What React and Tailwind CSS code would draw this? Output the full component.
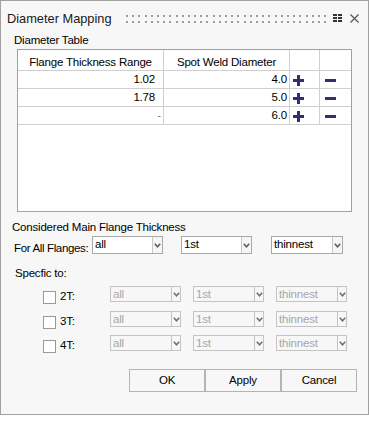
import React from 'react'

const FONT = { fontFamily: '"Liberation Sans", Arial, sans-serif' }

function Chevron({ color = '#606060' }) {
  return (
    <svg width="7" height="5" viewBox="0 0 7 5">
      <path d="M0.8 0.8 L3.5 3.8 L6.2 0.8" fill="none" stroke={color} strokeWidth="1.6" />
    </svg>
  )
}

function Combo({ value, width = 'w-[71px]', disabled = false }) {
  if (disabled) {
    return (
      <div className={`${width} h-[16px] flex border border-[#c4c4c4] bg-[#f7f7f7]`}>
        <div className="flex-1 pl-[2px] leading-[13px] pt-[1px] text-[#a8a8a8]">{value}</div>
        <div className="w-[9px] border-l border-[#c4c4c4] flex items-center justify-center">
          <Chevron color="#707070" />
        </div>
      </div>
    )
  }
  return (
    <div className={`${width} h-[18px] flex border border-[#a8a8a8] bg-white`}>
      <div className="flex-1 pl-[2px] leading-[13px] pt-[1px] text-black">{value}</div>
      <div className="w-[10px] border-l border-[#c8c8c8] bg-[#f5f5f5] flex items-center justify-center">
        <Chevron />
      </div>
    </div>
  )
}

function Plus() {
  return (
    <svg width="11" height="11" viewBox="0 0 11 11">
      <rect x="0" y="4" width="11" height="3" fill="#2e3070" />
      <rect x="4" y="0" width="3" height="11" fill="#2e3070" />
    </svg>
  )
}

function Minus() {
  return (
    <svg width="11" height="3" viewBox="0 0 11 3">
      <rect x="0" y="0" width="11" height="3" fill="#2e3070" />
    </svg>
  )
}

function Grip() {
  const dots = Array.from({ length: 33 }, (_, i) => Math.round(i * 6.19))
  return (
    <svg width="202" height="18" viewBox="0 0 202 18">
      {dots.map(x => (
        <g key={x} fill="#9c9c9c">
          <rect x={x} y="5" width="2" height="2" />
          <rect x={x} y="11" width="2" height="2" />
        </g>
      ))}
    </svg>
  )
}

const rows = [
  { range: '1.02', rangePad: 'pr-[8px]', dia: '4.0', dim: false },
  { range: '1.78', rangePad: 'pr-[8px]', dia: '5.0', dim: false },
  { range: '-', rangePad: 'pr-[2px]', dia: '6.0', dim: true },
]

function SpecRow({ label, top }) {
  return (
    <div className={`flex items-start h-[16px] pl-[42px] ${top}`}>
      <div className="w-[13px] h-[13px] mt-[5px] border border-[#9a9a9a] bg-white" />
      <div className="w-[50px] ml-[4px] mt-[3px] leading-[15px]">{label}</div>
      <Combo value="all" disabled />
      <div className="ml-[12px]"><Combo value="1st" disabled /></div>
      <div className="ml-[12px]"><Combo value="thinnest" disabled /></div>
    </div>
  )
}

export default function App() {
  return (
    <div style={FONT} className="w-[369px] h-[425px] bg-white text-[11.5px] tracking-[-0.2px] text-black whitespace-nowrap">
      <div className="w-[369px] h-[415px] border border-[#a0a0a0] bg-[#f7f7f7] flex flex-col">

        {/* Title bar */}
        <div className="flex items-center h-[18px] mt-[9px] pl-[6px]">
          <div className="w-[119px] text-[12.8px] tracking-normal leading-[18px] text-[#1a1a1a]">Diameter Mapping</div>
          <Grip />
          <svg className="ml-[5px]" width="10" height="18" viewBox="0 0 10 18">
            <g fill="#333">
              <rect x="0" y="4" width="4" height="2" />
              <rect x="5" y="4" width="4" height="2" />
              <rect x="0" y="7" width="4" height="2" />
              <rect x="5" y="7" width="4" height="2" />
              <rect x="0" y="10" width="4" height="2" />
              <rect x="5" y="10" width="4" height="2" />
            </g>
          </svg>
          <svg className="ml-[7px]" width="9" height="18" viewBox="0 0 9 18">
            <path d="M0.5 4.5 L8.5 12.5 M8.5 4.5 L0.5 12.5" stroke="#555" strokeWidth="1.2" />
          </svg>
        </div>

        <div className="mt-[5px] pl-[13px] leading-[15px]">Diameter Table</div>

        {/* Table */}
        <div className="mt-[1px] ml-[16px] w-[335px] h-[163px] border border-[#a0a0a0] bg-white flex flex-col">
          <div className="flex h-[21px] border-b border-[#cfcfcf]">
            <div className="w-[146px] border-r border-[#cfcfcf] flex items-end justify-center leading-[15px]">Flange Thickness Range</div>
            <div className="w-[126px] border-r border-[#cfcfcf] flex items-end justify-center leading-[15px]">Spot Weld Diameter</div>
            <div className="w-[30px] border-r border-[#cfcfcf]" />
            <div className="w-[31px]" />
          </div>
          {rows.map(r => (
            <div key={r.dia} className="flex h-[18px] border-b border-[#cfcfcf]">
              <div className={`w-[146px] border-r border-[#cfcfcf] text-right leading-[17px] ${r.rangePad} ${r.dim ? 'text-[#808080]' : ''}`}>{r.range}</div>
              <div className="w-[126px] border-r border-[#cfcfcf] text-right leading-[17px] pr-[2px]">{r.dia}</div>
              <div className="w-[30px] border-r border-[#cfcfcf] flex items-center pl-[3px] pt-[1px]"><Plus /></div>
              <div className="w-[31px] flex items-center pl-[5px] pt-[1px]"><Minus /></div>
            </div>
          ))}
        </div>

        <div className="mt-[8px] pl-[11px] leading-[15px]">Considered Main Flange Thickness</div>

        <div className="mt-[1px] flex items-start h-[18px] pl-[13px]">
          <div className="w-[78px] mt-[5px] leading-[15px] tracking-[-0.35px]">For All Flanges:</div>
          <Combo value="all" />
          <div className="ml-[18px]"><Combo value="1st" /></div>
          <div className="ml-[19px]"><Combo value="thinnest" width="w-[72px]" /></div>
        </div>

        <div className="mt-[12px] pl-[14px] leading-[15px]">Specfic to:</div>

        <SpecRow label="2T:" top="mt-[5px]" />
        <SpecRow label="3T:" top="mt-[9px]" />
        <SpecRow label="4T:" top="mt-[8px]" />

        <div className="mt-[18px] pl-[128px] flex">
          {['OK', 'Apply', 'Cancel'].map(b => (
            <div key={b} className="w-[76px] h-[23px] border border-[#b4b4b4] bg-[#f7f7f7] flex items-center justify-center">{b}</div>
          ))}
        </div>
      </div>
    </div>
  )
}
